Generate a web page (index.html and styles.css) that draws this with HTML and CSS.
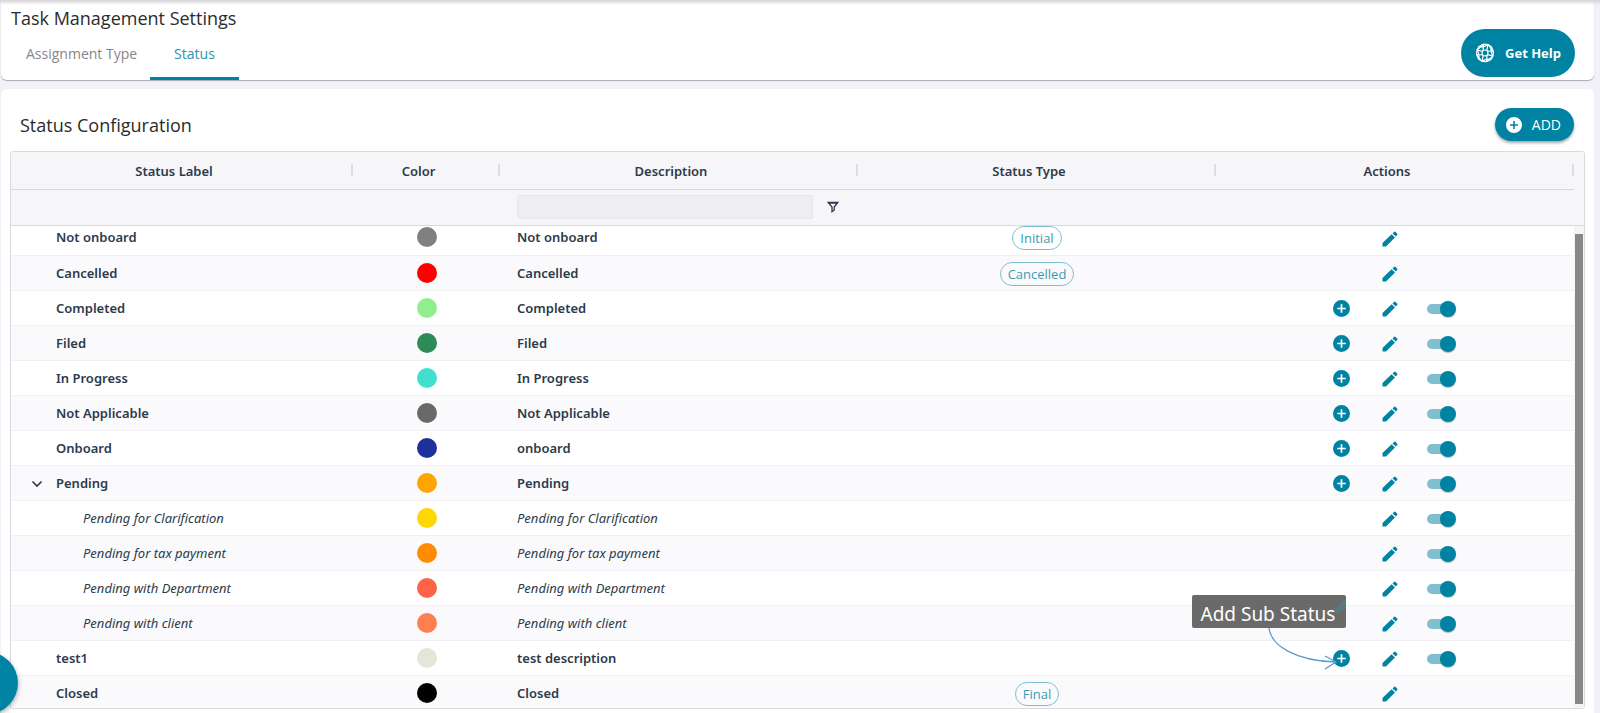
FILE: index.html
```html
<!DOCTYPE html>
<html lang="en">
<head>
  <meta charset="UTF-8">
  <title>Task Management Settings</title>
  <meta name="viewport" content="width=device-width, initial-scale=1.0">
  <link rel="stylesheet" href="styles.css">
</head>
<body>
  <svg class="sprite">
    <symbol id="icon-plus" viewBox="0 0 24 24">
      <path d="M12 0a12 12 0 1 0 0 24a12 12 0 0 0 0-24zm6 13.2h-4.8V18h-2.4v-4.8H6v-2.4h4.8V6h2.4v4.8H18z"/>
    </symbol>
    <symbol id="icon-pencil" viewBox="0 0 16 16">
      <path d="M.5 15.500V12L9.600 3.200 13 6.500 4 15.500zM10.500 2.400 12 1q.8-.8 1.600 0l1.500 1.500q.8.800 0 1.600L13.800 5.600z"/>
    </symbol>
  </svg>

  <header class="topbar">
    <div>
      <h1>Task Management Settings</h1>
      <nav class="tabs">
        <a href="#assignment">Assignment Type</a>
        <a href="#status" class="active">Status</a>
      </nav>
    </div>
    <button class="help">
      <svg width="20" height="20" viewBox="0 0 20 20" fill="none" stroke="currentColor" stroke-width="1.200">
        <path d="M8.500 1.200 13 1.500 18.400 8.500 18 13 11.500 18.600 7 18.300 1.600 11.500 2 7z" stroke-linejoin="round"/>
        <circle cx="10" cy="10" r="3"/>
        <path d="M8.500 1.200 8 7.600M13 1.500 11.800 7.600M18.400 8.500 12.400 8M18 13 12.500 11.700M11.500 18.600 12 12.300M7 18.300 8.200 12.400M1.600 11.500 7.600 12M2 7 7.500 8.300M4 3.500Q8 5 13 1.500M16.500 4Q15 8 18 13M16 16.500Q12 15 7 18.300M3.500 16Q5 12 2 7M2 7 4 3.500 8.500 1.200M13 1.500 16.500 4 18.400 8.500M18 13 16 16.500 11.500 18.600M7 18.300 3.500 16 1.600 11.500"/>
      </svg>
      Get Help
    </button>
  </header>

  <main class="panel">
    <div class="panel-head">
      <h2>Status Configuration</h2>
      <button class="add"><svg width="16" height="16"><use href="#icon-plus"/></svg>ADD</button>
    </div>

    <div class="grid">
      <div class="grid-head">
        <table>
          <colgroup><col class="col-label"><col class="col-color"><col><col><col></colgroup>
          <thead>
            <tr>
              <th>Status Label</th>
              <th>Color</th>
              <th>Description</th>
              <th>Status Type</th>
              <th>Actions</th>
            </tr>
            <tr class="filters">
              <td></td>
              <td></td>
              <td>
                <div class="filter">
                  <input type="text" aria-label="Description filter" disabled>
                  <button aria-label="Open filter menu">
                    <svg width="12" height="12" viewBox="0 0 12 12" fill="none" stroke="currentColor" stroke-width="1.300"><path d="M1.200 1.500h9.600L7.200 6v3L5 10.700V6zM1 2h10"/></svg>
                  </button>
                </div>
              </td>
              <td></td>
              <td></td>
            </tr>
          </thead>
        </table>
      </div>
      <div class="grid-body">
        <table>
          <colgroup><col class="col-label"><col class="col-color"><col><col><col></colgroup>
          <tbody id="rows"></tbody>
        </table>
        <div class="scrollbar"><div class="thumb"></div></div>
      </div>
    </div>
  </main>

  <button class="bubble" aria-label="Open menu"></button>

  <script>
    const statuses = [
      { label: 'Not onboard', color: '#808080', type: 'Initial' },
      { label: 'Cancelled', color: '#ff0000', type: 'Cancelled' },
      { label: 'Completed', color: '#90ee90', custom: true },
      { label: 'Filed', color: '#2e8b57', custom: true },
      { label: 'In Progress', color: '#40e0d0', custom: true },
      { label: 'Not Applicable', color: '#696969', custom: true },
      { label: 'Onboard', desc: 'onboard', color: '#1f2f9c', custom: true },
      { label: 'Pending', color: '#ffa500', custom: true, open: true },
      { label: 'Pending for Clarification', color: '#ffd700', sub: true },
      { label: 'Pending for tax payment', color: '#ff8c00', sub: true },
      { label: 'Pending with Department', color: '#ff6347', sub: true },
      { label: 'Pending with client', color: '#ff7f50', sub: true },
      { label: 'test1', desc: 'test description', color: '#e4e6d7', custom: true, tip: 'Add Sub Status' },
      { label: 'Closed', color: '#000000', type: 'Final' }
    ];

    const chevron = `<button class="expand" aria-label="Collapse"><svg width="12" height="8" viewBox="0 0 12 8" fill="none" stroke="currentColor" stroke-width="1.600"><path d="M1.500 1.500 6 6l4.500-4.500"/></svg></button>`;

    function tooltip(text) {
      return `<div class="tooltip" role="tooltip">${text}
        <svg class="tip-pencil" width="11" height="17" viewBox="0 0 11 17"><path d="M11 1 0 12v4h4l7-7z"/></svg>
        <svg class="tip-arrow" width="72" height="44" viewBox="0 0 72 44" fill="none"><path d="M1 0C3 18 28 33 68 34M57 28 68 34 57 41"/></svg>
      </div>`;
    }

    function actions(s) {
      const add = s.custom ? `<button class="act-add" aria-label="Add sub status to ${s.label}"><svg width="17" height="17"><use href="#icon-plus"/></svg></button>` : '';
      const edit = `<button class="act-edit" aria-label="Edit ${s.label}"><svg width="16" height="16"><use href="#icon-pencil"/></svg></button>`;
      const toggle = s.custom || s.sub ? `<input type="checkbox" class="act-toggle" aria-label="${s.label} enabled" checked>` : '';
      return `<div class="actions">${add}${edit}${toggle}${s.tip ? tooltip(s.tip) : ''}</div>`;
    }

    document.getElementById('rows').innerHTML = statuses.map(s => `
      <tr class="${s.sub ? 'sub' : ''}">
        <td class="label">${s.open ? chevron : ''}${s.label}</td>
        <td><span class="dot" style="background:${s.color}"></span></td>
        <td class="desc">${s.desc || s.label}</td>
        <td>${s.type ? `<span class="chip">${s.type}</span>` : ''}</td>
        <td>${actions(s)}</td>
      </tr>`).join('');
  </script>
</body>
</html>
```
FILE: styles.css
```css
:root {
  --teal: #0083a3;
  --teal-soft: #80bfd0;
  --bg: #f1f2f9;
  --line: #d9dade;
  --row-line: #f0f0f5;
  --text: #2c3a4b;
}

* {
  box-sizing: border-box;
  margin: 0;
  padding: 0;
}

body {
  display: flex;
  flex-direction: column;
  gap: 9px;
  height: 100vh;
  padding: 0 6px 0 1px;
  overflow: hidden;
  background: var(--bg);
  color: var(--text);
  font-family: "Open Sans", "Noto Sans", sans-serif;
  font-size: 14px;
}

body::before {
  content: "";
  position: absolute;
  top: 0;
  left: 0;
  right: 0;
  height: 5px;
  background: linear-gradient(#d4d4d6, transparent);
}

button {
  border: none;
  background: none;
  color: inherit;
  font: inherit;
  cursor: pointer;
}

svg {
  display: block;
  fill: currentColor;
}

svg[fill="none"] {
  fill: none;
}

.sprite {
  position: absolute;
  width: 0;
  height: 0;
}

/* page header */
.topbar {
  display: flex;
  justify-content: space-between;
  align-items: flex-end;
  padding: 6px 19px 0 10px;
  border-radius: 0 0 6px 6px;
  background: #fff;
  box-shadow: 0 1px 1px #a9a9ad;
}

h1,
h2 {
  color: #2b2b2b;
  font-size: 18px;
  font-weight: 400;
  line-height: 24px;
}

.tabs {
  display: flex;
}

.tabs a {
  padding: 14px 24px 13px;
  border-bottom: 3px solid transparent;
  color: #85878a;
  line-height: 20px;
  text-decoration: none;
}

.tabs a:first-child {
  padding-left: 15px;
  padding-right: 13px;
}

.tabs .active {
  border-color: var(--teal);
  color: #2b95b1;
}

.help {
  display: flex;
  align-items: center;
  gap: 10px;
  height: 48px;
  margin-bottom: 3px;
  padding: 0 14px;
  border-radius: 24px;
  background: var(--teal);
  color: #fff;
  font-size: 13px;
  font-weight: 700;
}

/* status panel */
.panel {
  display: flex;
  flex: 1;
  flex-direction: column;
  min-height: 0;
  padding: 19px 9px 4px;
  border-radius: 6px 6px 0 0;
  background: #fff;
}

.panel-head {
  display: flex;
  justify-content: space-between;
  align-items: center;
  padding: 0 11px 10px 10px;
}

.add {
  display: flex;
  align-items: center;
  gap: 10px;
  height: 33px;
  padding: 0 13px 0 11px;
  border-radius: 17px;
  background: var(--teal);
  color: #fff;
  box-shadow: 0 2px 3px rgba(0, 0, 0, 0.35);
}

.grid {
  display: flex;
  flex: 1;
  flex-direction: column;
  min-height: 0;
  border: 1px solid var(--line);
  border-radius: 3px;
  font-family: "Noto Sans", sans-serif;
  font-size: 13px;
}

.grid-head {
  padding-right: 10px;
  border-bottom: 1px solid var(--line);
  background: #f6f6f9;
}

table {
  width: 100%;
  border-collapse: collapse;
  table-layout: fixed;
}

.col-label {
  width: 342px;
}

.col-color {
  width: 147px;
}

th {
  height: 37px;
  padding: 1px 16px 0 0;
  border-bottom: 1px solid var(--line);
  background: linear-gradient(#dddde2, #dddde2) right 12px / 2px 12px no-repeat;
  font-weight: 600;
}

.filters td {
  height: 36px;
}

.filter {
  display: flex;
  align-items: center;
  gap: 14px;
  padding: 0 19px 0 17px;
}

.filter input {
  flex: 1;
  min-width: 0;
  height: 24px;
  border: 1px solid #e4e4ea;
  border-radius: 3px;
  background: #eeedf2;
}

.grid-body {
  display: flex;
  flex: 1;
  align-items: flex-start;
  min-height: 0;
  overflow: hidden;
}

/* the list is scrolled down by a few pixels */
.grid-body table {
  flex: 1;
  margin-top: -6px;
}

tbody td {
  height: 35px;
  border-bottom: 1px solid var(--row-line);
  text-align: center;
}

tbody tr:nth-child(even) {
  background: #fafafc;
}

tbody .label,
tbody .desc {
  font-weight: 600;
  text-align: left;
}

tbody .label {
  padding-left: 45px;
}

tbody .desc {
  padding-left: 17px;
}

tbody .sub .label {
  padding-left: 72px;
}

tbody .sub .label,
tbody .sub .desc {
  font-style: italic;
  font-weight: 400;
}

.expand {
  width: 25px;
  margin-left: -25px;
}

.dot {
  display: block;
  width: 20px;
  height: 20px;
  margin: 0 auto;
  border-radius: 50%;
}

.chip {
  display: inline-block;
  margin-top: 2px;
  padding: 0 7px;
  border: 1px solid var(--teal-soft);
  border-radius: 12px;
  color: #3b9ab4;
  font-family: "Open Sans", sans-serif;
  line-height: 22px;
}

.actions {
  position: relative;
  display: inline-grid;
  grid-template-columns: 18px 18px 29px;
  gap: 29px;
  align-items: center;
  height: 18px;
  margin: 2px 2px 0 0;
  color: var(--teal);
  vertical-align: middle;
}

.act-add,
.act-edit,
.act-toggle {
  grid-row: 1;
}

.act-edit {
  grid-column: 2;
  padding-left: 2px;
}

.act-toggle {
  display: flex;
  grid-column: 3;
  align-items: center;
  appearance: none;
  width: 29px;
  height: 16px;
}

.act-toggle::before {
  content: "";
  width: 22px;
  height: 10px;
  border-radius: 5px;
  background: var(--teal-soft);
}

.act-toggle::after {
  content: "";
  width: 16px;
  height: 16px;
  margin-left: -9px;
  border-radius: 50%;
  background: var(--teal);
  box-shadow: 0 1px 1px rgba(0, 0, 0, 0.25);
}

/* hint over the row above, its arrow points at the plus icon */
.tooltip {
  position: absolute;
  right: 110px;
  bottom: 40px;
  width: 154px;
  padding: 6px 0 0 9px;
  border-radius: 2px;
  background: #6a6a6a;
  color: #fff;
  font-size: 19px;
  line-height: 27px;
  text-align: left;
  white-space: nowrap;
}

.tip-pencil {
  position: absolute;
  top: 2px;
  right: 0;
  color: #5a7880;
}

.tip-arrow {
  position: absolute;
  top: 33px;
  left: 76px;
  stroke: #5b9bd5;
  stroke-width: 1.3;
}

.scrollbar {
  flex: none;
  align-self: stretch;
  width: 10px;
  padding: 8px 1px 4px;
  background: #f4f4f4;
}

.thumb {
  height: 100%;
  background: #888;
}

/* floating button, mostly off the left edge */
.bubble {
  position: absolute;
  left: -44px;
  bottom: -1px;
  width: 62px;
  height: 62px;
  border-radius: 50%;
  background: var(--teal);
  box-shadow: 0 2px 5px rgba(0, 0, 0, 0.35);
}
```
